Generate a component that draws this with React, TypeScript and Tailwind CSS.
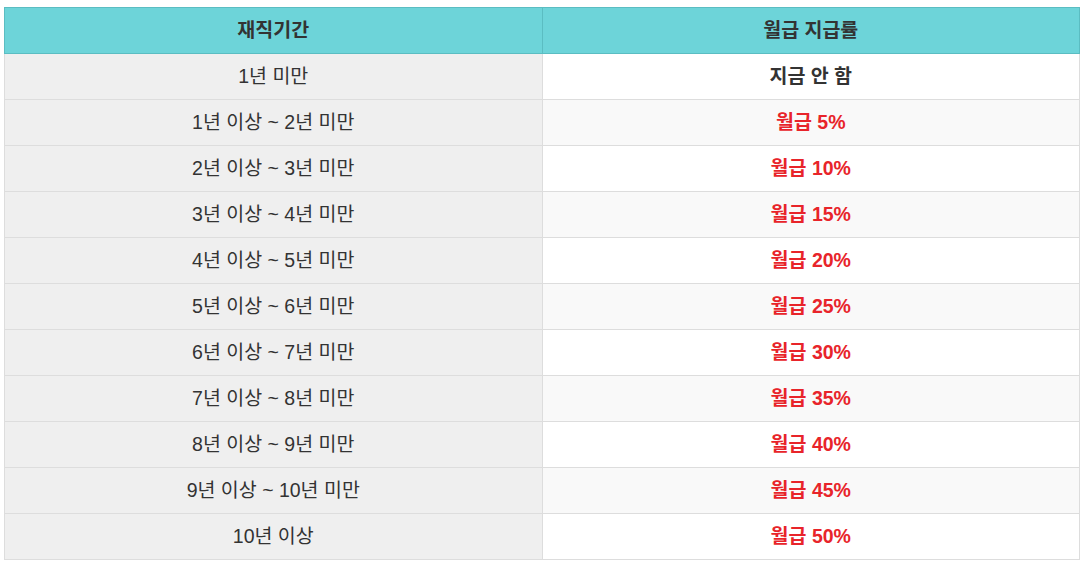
const rows = [
  { period: '1년 미만', rate: '지금 안 함' },
  { period: '1년 이상 ~ 2년 미만', rate: '월급 5%' },
  { period: '2년 이상 ~ 3년 미만', rate: '월급 10%' },
  { period: '3년 이상 ~ 4년 미만', rate: '월급 15%' },
  { period: '4년 이상 ~ 5년 미만', rate: '월급 20%' },
  { period: '5년 이상 ~ 6년 미만', rate: '월급 25%' },
  { period: '6년 이상 ~ 7년 미만', rate: '월급 30%' },
  { period: '7년 이상 ~ 8년 미만', rate: '월급 35%' },
  { period: '8년 이상 ~ 9년 미만', rate: '월급 40%' },
  { period: '9년 이상 ~ 10년 미만', rate: '월급 45%' },
  { period: '10년 이상', rate: '월급 50%' },
]

export default function App() {
  return (
    <div
      className="bg-white pt-[7px] pl-[4px] w-[1087px] h-[567px]"
      style={{ fontFamily: '"Liberation Sans", "Noto Sans CJK KR", sans-serif' }}
    >
      <table className="w-[1076px] border-collapse table-fixed text-[19.5px] leading-none">
        <thead>
          <tr className="h-[46px] bg-[#6dd4d9]">
            <th className="border border-[#5bbdc2] font-bold text-[#333333]">재직기간</th>
            <th className="border border-[#5bbdc2] font-bold text-[#333333]">월급 지급률</th>
          </tr>
        </thead>
        <tbody>
          {rows.map((r, i) => (
            <tr key={r.period} className="h-[46px]">
              <td className="border border-[#dddddd] bg-[#efefef] text-center text-[#333333]">
                {r.period}
              </td>
              <td
                className={
                  'border border-[#dddddd] text-center font-bold ' +
                  (i % 2 === 1 ? 'bg-[#f9f9f9] ' : 'bg-white ') +
                  (i === 0 ? 'text-[#333333]' : 'text-[#e8242a]')
                }
              >
                {r.rate}
              </td>
            </tr>
          ))}
        </tbody>
      </table>
    </div>
  )
}
